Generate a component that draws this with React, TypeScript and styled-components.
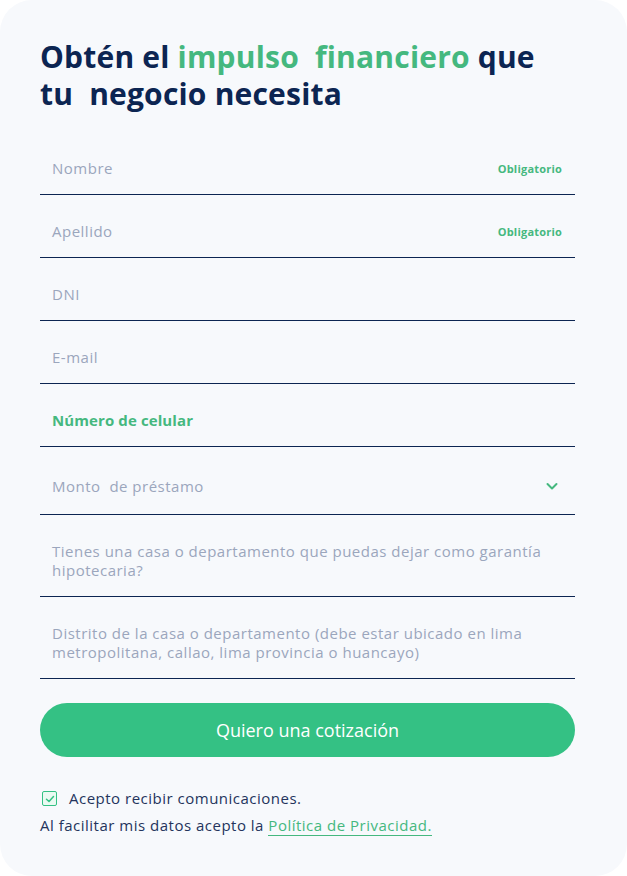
import React from "react";
import styled, { createGlobalStyle } from "styled-components";

const Global = createGlobalStyle`
  html, body { margin: 0; padding: 0; background: #ffffff; }
  body { font-family: "Open Sans", "Liberation Sans", sans-serif; }
  * { box-sizing: border-box; }
`;

const NAVY = "#0c2552";
const GREEN = "#45b87f";
const BTN = "#34c184";
const PH = "#9ba6bd";
const BODY = "'Open Sans', 'Liberation Sans', sans-serif";

const Card = styled.div`
  width: 627px;
  height: 876px;
  background: #f7f9fc;
  border-radius: 32px;
  padding: 38px 52px 0 40px;
  display: flex;
  flex-direction: column;
`;

const Title = styled.h1`
  margin: 0;
  font-family: ${BODY};
  font-weight: 700;
  font-size: 30px;
  line-height: 37px;
  color: ${NAVY};
  letter-spacing: 0.2px;
  white-space: pre;
`;

const Accent = styled.span`
  color: ${GREEN};
`;

const Form = styled.form`
  margin-top: 20px;
  display: flex;
  flex-direction: column;
`;

const Field = styled.div`
  display: flex;
  align-items: center;
  justify-content: space-between;
  gap: 16px;
  padding: 27px 12px 16px 12px;
  border-bottom: 1px solid ${NAVY};
`;

const Placeholder = styled.span<{ $active?: boolean }>`
  font-family: ${BODY};
  font-size: 15px;
  line-height: 19px;
  letter-spacing: ${(p) => (p.$active ? 0.1 : 0.5)}px;
  color: ${(p) => (p.$active ? GREEN : PH)};
  font-weight: ${(p) => (p.$active ? 700 : 400)};
  white-space: pre-wrap;
`;

const Required = styled.span`
  font-family: ${BODY};
  font-size: 11px;
  font-weight: 700;
  letter-spacing: 0.2px;
  color: ${GREEN};
  padding-right: 1px;
`;

const ChevronBox = styled.span`
  height: 24px;
  display: flex;
  align-items: center;
  margin-right: 4px;
  flex: none;
`;

const Button = styled.button`
  margin-top: 24px;
  height: 54px;
  width: 100%;
  border: none;
  border-radius: 27px;
  background: ${BTN};
  color: #ffffff;
  font-family: ${BODY};
  font-size: 18px;
  font-weight: 500;
  cursor: pointer;
`;

const Consent = styled.div`
  margin-top: 32px;
  display: flex;
  flex-direction: column;
  gap: 8px;
`;

const CheckRow = styled.label`
  display: flex;
  align-items: center;
  gap: 12px;
  padding-left: 2px;
  font-family: ${BODY};
  font-size: 15px;
  line-height: 19px;
  letter-spacing: 0.5px;
  color: #24345c;
`;

const Box = styled.span`
  width: 15px;
  height: 15px;
  border: 1.5px solid ${BTN};
  border-radius: 2px;
  display: flex;
  align-items: center;
  justify-content: center;
  background: #eafaf2;
`;

const Legal = styled.p`
  margin: 0;
  font-family: ${BODY};
  font-size: 15px;
  line-height: 19px;
  letter-spacing: 0.5px;
  color: #24345c;
`;

const Link = styled.a`
  color: ${GREEN};
  text-decoration: none;
  border-bottom: 1px solid ${GREEN};
`;

export default function App() {
  return (
    <>
      <Global />
      <Card>
        <Title>
          Obtén el <Accent>impulso  financiero</Accent> que{"\n"}tu  negocio necesita
        </Title>
        <Form onSubmit={(e) => e.preventDefault()}>
          <Field>
            <Placeholder>Nombre</Placeholder>
            <Required>Obligatorio</Required>
          </Field>
          <Field>
            <Placeholder>Apellido</Placeholder>
            <Required>Obligatorio</Required>
          </Field>
          <Field>
            <Placeholder>DNI</Placeholder>
          </Field>
          <Field>
            <Placeholder>E-mail</Placeholder>
          </Field>
          <Field>
            <Placeholder $active>Número de celular</Placeholder>
          </Field>
          <Field>
            <Placeholder>Monto  de préstamo</Placeholder>
            <ChevronBox>
              <svg width="14" height="14" viewBox="0 0 14 14" fill="none">
                <path d="M2.5 5 L7 9.5 L11.5 5" stroke={GREEN} strokeWidth="2" strokeLinecap="round" strokeLinejoin="round" />
              </svg>
            </ChevronBox>
          </Field>
          <Field>
            <Placeholder>
              Tienes una casa o departamento que puedas dejar como garantía hipotecaria?
            </Placeholder>
          </Field>
          <Field>
            <Placeholder>
              Distrito de la casa o departamento (debe estar ubicado en lima metropolitana, callao, lima provincia o huancayo)
            </Placeholder>
          </Field>
          <Button type="submit">Quiero una cotización</Button>
        </Form>
        <Consent>
          <CheckRow>
            <Box>
              <svg width="10" height="10" viewBox="0 0 10 10" fill="none">
                <path d="M1.5 5.2 L4 7.5 L8.5 2.5" stroke={BTN} strokeWidth="1.5" strokeLinecap="round" strokeLinejoin="round" />
              </svg>
            </Box>
            Acepto recibir comunicaciones.
          </CheckRow>
          <Legal>
            Al facilitar mis datos acepto la <Link href="#">Política de Privacidad.</Link>
          </Legal>
        </Consent>
      </Card>
    </>
  );
}
